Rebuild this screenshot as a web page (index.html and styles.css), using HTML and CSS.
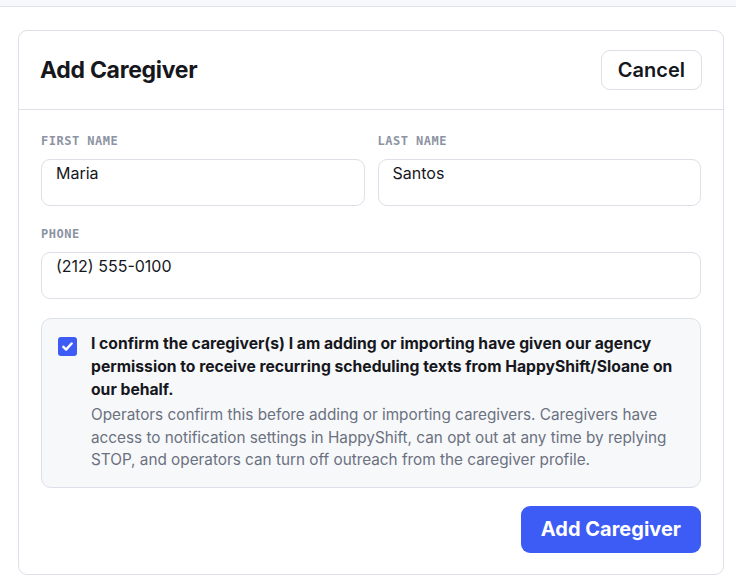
FILE: index.html
```html
<!DOCTYPE html>
<html><head>
<meta charset="utf-8">
<meta name="viewport" content="width=device-width, initial-scale=1">
<title>Add Caregiver</title>
<link rel="stylesheet" href="styles.css"></head>

<body>
<div class="topbar"></div>

<div class="card">
	<div class="cardHead">
		<h2>Add Caregiver</h2>
		<button class="btnGhost">Cancel</button>
	</div>

	<div class="cardBody">
		<div class="row">
			<div class="field">
				<label>First name</label>
				<div class="input">Maria</div>
			</div>
			<div class="field">
				<label>Last name</label>
				<div class="input">Santos</div>
			</div>
		</div>

		<div class="field">
			<label>Phone</label>
			<div class="input">(212) 555-0100</div>
		</div>

		<div class="consent">
			<span class="check">
				<svg width="13" height="13" viewBox="0 0 12 12"><path d="M2.2 6.3 L4.8 8.8 L9.8 3.2" fill="none" stroke="#fff" stroke-width="2.3" stroke-linecap="round" stroke-linejoin="round"/></svg>
			</span>
			<div>
				<p class="consentMain">I confirm the caregiver(s) I am adding or importing have given our agency permission to receive recurring scheduling texts from HappyShift/Sloane on our behalf.</p>
				<p class="consentNote">Operators confirm this before adding or importing caregivers. Caregivers have access to notification settings in HappyShift, can opt out at any time by replying STOP, and operators can turn off outreach from the caregiver profile.</p>
			</div>
		</div>

		<div class="actions">
			<button class="btnPrimary">Add Caregiver</button>
		</div>
	</div>
</div>
</body>
</html>
```

FILE: styles.css
```css
/* page */
body {
	margin: 0;
	background: #ffffff;
	font-family: Inter, "Noto Sans", sans-serif;
	color: #16171c;
}
.topbar {
	height: 6px;
	background: #f7f8fa;
	border-bottom: 1px solid #e1e4ea;
}

/* card */
.card {
	margin: 23px 0 0 18px;
	width: 704px;
	border: 1px solid #dde0e8;
	border-radius: 9px;
	background: #ffffff;
}
.cardHead {
	display: flex;
	align-items: center;
	justify-content: space-between;
	height: 78px;
	padding: 0 21px 0 21px;
	border-bottom: 1px solid #dde0e8;
}
.cardHead h2 {
	margin: 0;
	font-size: 23px;
	font-weight: 700;
	letter-spacing: -0.3px;
}
.btnGhost {
	font-family: inherit;
	font-size: 20px;
	font-weight: 600;
	color: #16171c;
	background: #ffffff;
	border: 1px solid #dde0e8;
	border-radius: 9px;
	height: 40px;
	padding: 0 16px;
}

.cardBody {
	padding: 24px 22px 21px 22px;
}
.row {
	display: flex;
	gap: 13px;
}
.row .field {
	flex: 1;
}
.field {
	margin-bottom: 21px;
}
.field label {
	display: block;
	font-family: "DejaVu Sans Mono", monospace;
	font-size: 12px;
	font-weight: 700;
	letter-spacing: 0.5px;
	text-transform: uppercase;
	color: #8c93a3;
	margin-bottom: 11px;
}
.input {
	height: 47px;
	box-sizing: border-box;
	border: 1px solid #dde0e8;
	border-radius: 9px;
	padding: 2px 14px;
	font-size: 16px;
	line-height: 22px;
	color: #16171c;
}

/* consent box */
.consent {
	display: flex;
	gap: 14px;
	margin-top: -2px;
	padding: 13px 20px 15px 16px;
	background: #f7f8fa;
	border: 1px solid #dde0e8;
	border-radius: 10px;
}
.check {
	flex: none;
	width: 19px;
	height: 19px;
	margin-top: 5px;
	border-radius: 3px;
	background: #3d5cf5;
	display: flex;
	align-items: center;
	justify-content: center;
}
.consent p {
	margin: 0;
}
.consentMain {
	font-size: 15.7px;
	font-weight: 700;
	line-height: 23px;
	color: #16171c;
}
.consentNote {
	margin-top: 3px !important;
	font-size: 15.3px;
	line-height: 22.5px;
	color: #6b7180;
}

.actions {
	display: flex;
	justify-content: flex-end;
	margin-top: 18px;
}
.btnPrimary {
	font-family: inherit;
	font-size: 20px;
	font-weight: 700;
	color: #ffffff;
	background: #3d5cf5;
	border: none;
	border-radius: 9px;
	height: 47px;
	padding: 0 20px;
}
```
